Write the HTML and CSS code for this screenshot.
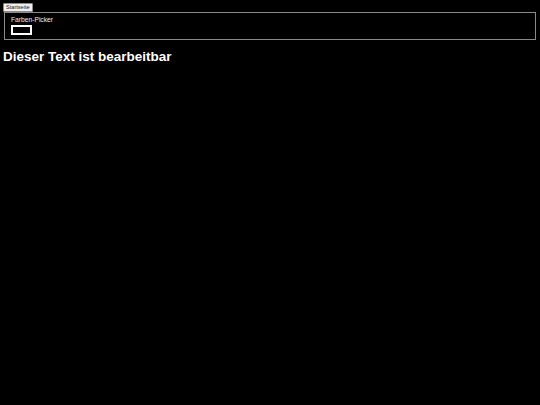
FILE: index.html
```html
<!DOCTYPE html>
<html lang="de">
<head>
<meta charset="utf-8">
<title>Farben-Picker</title>
<link rel="stylesheet" href="styles.css">
</head>
<body>
<nav class="nav"><button class="home-btn">Startseite</button></nav>
<fieldset class="picker">
  <div class="picker-label">Farben-Picker</div>
  <div class="swatch"></div>
</fieldset>
<h1 class="title">Dieser Text ist bearbeitbar</h1>
</body>
</html>
```

FILE: styles.css
```css
html, body {
  margin: 0;
  padding: 0;
  background: #000;
  color: #fff;
  font-family: "Liberation Sans", Arial, sans-serif;
}
body {
  padding: 3px 4px 0 4px;
}
.nav {
  display: flex;
}
.home-btn {
  margin: 0 0 0 -1px;
  font-family: "Liberation Sans", Arial, sans-serif;
  font-size: 5.6px;
  line-height: 7px;
  padding: 0 2px;
  height: 9px;
  background: #efefef;
  color: #222;
  border: 1px solid #8a8a8a;
  border-radius: 1px;
}
.picker {
  margin: 0;
  padding: 3px 5px 3px 6px;
  border: 1px solid #8a8a8a;
  height: 20px;
}
.picker-label {
  font-size: 6.7px;
  line-height: 8px;
  color: #eee;
}
.swatch {
  margin-top: 1px;
  margin-left: 0;
  width: 17px;
  height: 6px;
  border: 2px solid #fff;
  background: #000;
}
.title {
  margin: 9px 0 0 -1px;
  font-size: 13.5px;
  line-height: 16px;
  font-weight: bold;
}
```
